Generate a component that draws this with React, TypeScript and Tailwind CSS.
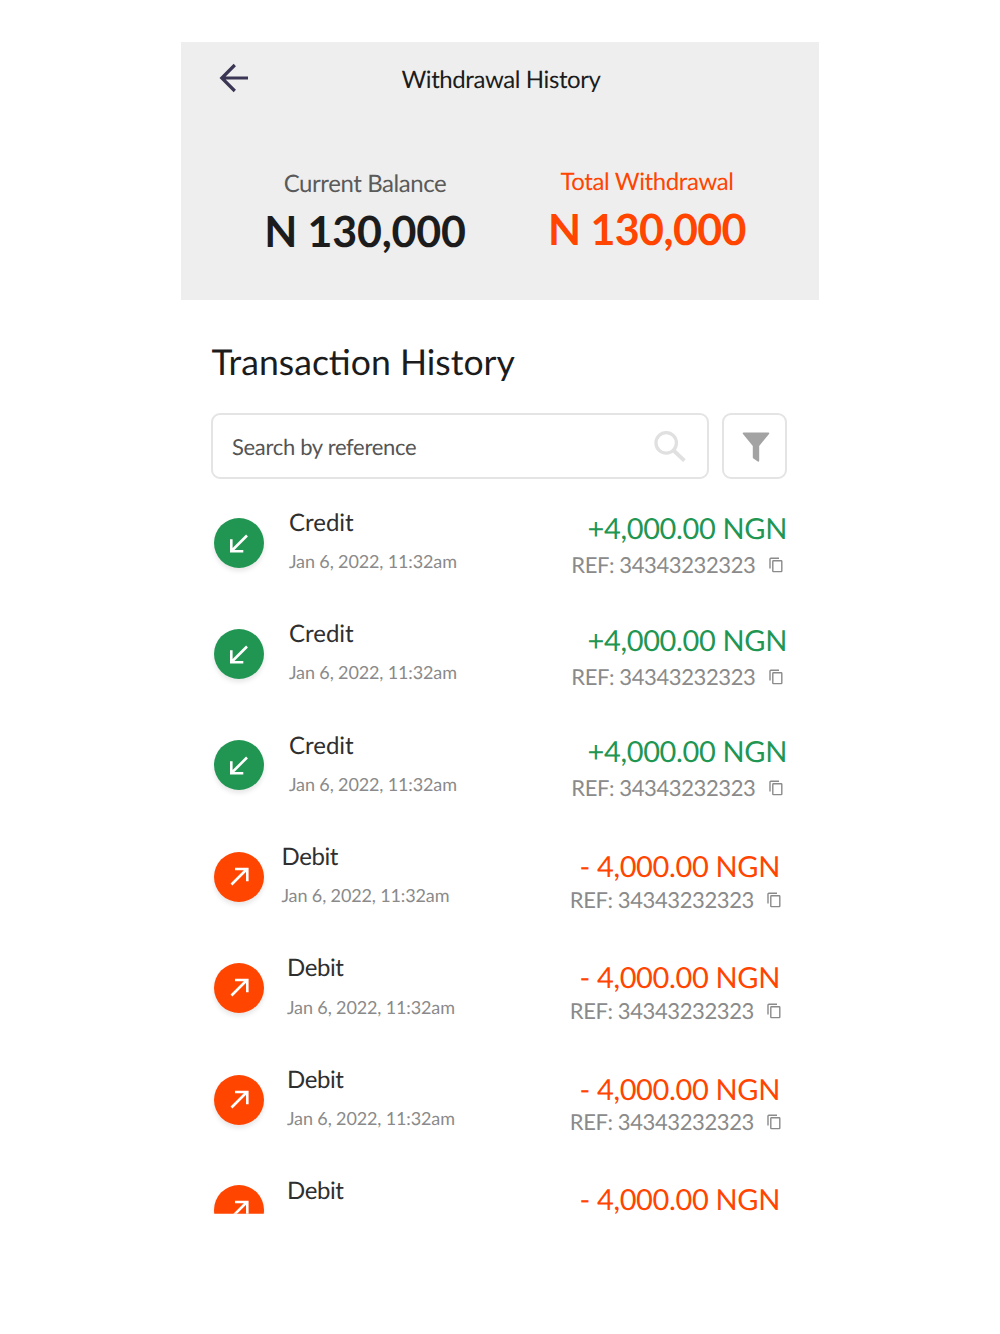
type Transaction = {
  kind: "Credit" | "Debit";
  amount: string;
  inset: string;
  partial?: boolean;
};

const transactions: Transaction[] = [
  { kind: "Credit", amount: "+4,000.00 NGN", inset: "ml-[25px]" },
  { kind: "Credit", amount: "+4,000.00 NGN", inset: "ml-[25px]" },
  { kind: "Credit", amount: "+4,000.00 NGN", inset: "ml-[25px]" },
  { kind: "Debit", amount: "- 4,000.00 NGN", inset: "ml-[17.5px]" },
  { kind: "Debit", amount: "- 4,000.00 NGN", inset: "ml-[23px]" },
  { kind: "Debit", amount: "- 4,000.00 NGN", inset: "ml-[23px]" },
  { kind: "Debit", amount: "- 4,000.00 NGN", inset: "ml-[23px]", partial: true },
];

function CopyIcon() {
  return (
    <svg width="14" height="16" viewBox="0 0 14 16" fill="none" stroke="#8a8a8a" strokeWidth="1.4">
      <rect x="3.8" y="3.8" width="9" height="10.8" rx="0.6" />
      <path d="M1 11.6V2Q1 1.2 1.8 1.2H10" />
    </svg>
  );
}

function Row({ item }: { item: Transaction }) {
  const credit = item.kind === "Credit";
  return (
    <li className="flex h-[111.4px] shrink-0 items-start">
      <div
        className={`flex size-[50px] shrink-0 items-center justify-center rounded-full shadow-[0_3px_5px_rgba(0,0,0,0.1)] ${
          item.partial ? "mt-[10px] [clip-path:inset(-10px_-10px_21.5px_-10px)]" : "mt-[10.7px]"
        } ${credit ? "bg-[#219653]" : "bg-[#ff4500]"}`}
      >
        <svg width="50" height="50" viewBox="0 0 50 50" fill="none" stroke="#fff" strokeWidth="2.6">
          {credit ? (
            <path d="M33 17.5L17.5 33M17.3 21.3V33.2H29.3" />
          ) : (
            <path d="M17.5 32.5L33 17M21 17H33.3V29.3" />
          )}
        </svg>
      </div>
      <div className={item.inset}>
        <p className={`mt-[1.9px] text-[24px] leading-7 text-[#2f2f2f] ${credit ? "" : "tracking-[-0.4px]"}`}>
          {item.kind}
        </p>
        {!item.partial && (
          <p className="mt-[12.2px] text-[18px] leading-6 tracking-[-0.13px] text-[#8a8a8a]">Jan 6, 2022, 11:32am</p>
        )}
      </div>
      <div className={`ml-auto flex flex-col items-end ${credit ? "" : "mr-[7px]"}`}>
        <p
          className={`text-[29px] leading-9 tracking-[-0.35px] ${
            credit ? "mt-[4.4px] text-[#219653]" : item.partial ? "mt-[6.8px] text-[#ff4500]" : "mt-[7.9px] text-[#ff4500]"
          }`}
        >
          {item.amount}
        </p>
        {!item.partial && (
          <div className={`flex items-center text-[#8a8a8a] ${credit ? "mt-[3.9px] mr-[4.5px]" : "mt-[0.5px] -mr-[1px]"}`}>
            <span className="mr-[13px] text-[22px] leading-7 tracking-[-0.38px]">REF: 34343232323</span>
            <CopyIcon />
          </div>
        )}
      </div>
    </li>
  );
}

export default function App() {
  return (
    <div className="h-[1334px] overflow-hidden bg-white pt-[41.5px] pl-[181px] font-['Lato',sans-serif] whitespace-nowrap [text-rendering:geometricPrecision]">
      <main className="w-[638px]">
        <header className="h-[258px] bg-[#eeeeee]">
          <div className="grid grid-cols-[1fr_auto_1fr] items-start pt-[21.5px]">
            <svg className="ml-[38px]" width="30" height="30" viewBox="0 0 30 30" fill="none" stroke="#3b3654" strokeWidth="3.2">
              <path d="M29 15H3M15.8 2L2.8 15L15.8 28" />
            </svg>
            <h1 className="mt-[1.5px] ml-[2px] text-[24px] leading-[30px] tracking-[-0.4px] text-[#1c1c1c]">Withdrawal History</h1>
          </div>
          <div className="mt-[74px] flex">
            <div className="ml-[83.5px] flex w-[201px] flex-col items-center">
              <p className="text-[24px] leading-[30px] tracking-[-0.42px] text-[#5a5a5a]">Current Balance</p>
              <p className="mt-[6.5px] text-[43px] leading-[54px] font-bold tracking-[-0.2px] text-[#1c1c1c]">N 130,000</p>
            </div>
            <div className="-mt-[2px] ml-[81px] flex w-[201px] flex-col items-center text-[#ff4500]">
              <p className="text-[24px] leading-[30px] tracking-[-0.39px]">Total Withdrawal</p>
              <p className="mt-[6.5px] text-[43px] leading-[54px] font-bold tracking-[-0.6px]">N 130,000</p>
            </div>
          </div>
        </header>
        <section className="ml-[30px] w-[576px]">
          <h2 className="mt-[40px] ml-[0.5px] text-[35.6px] leading-[44px] text-[#1c1c1c]">Transaction History</h2>
          <div className="mt-[29.5px] flex gap-[13px]">
            <div className="flex h-[66px] w-[498px] items-center justify-between rounded-[9px] border-2 border-[#e4e4e4] pt-[1.5px] pr-[20px] pl-[19px]">
              <span className="text-[22px] leading-7 tracking-[-0.32px] text-[#555555]">Search by reference</span>
              <svg width="33" height="32" viewBox="0 0 33 32" fill="none" stroke="#e0e0e0">
                <circle cx="12.2" cy="11.9" r="10.2" strokeWidth="3.3" />
                <path d="M20.1 20L30.4 29.6" strokeWidth="3.8" />
              </svg>
            </div>
            <div className="flex h-[66px] w-[65px] items-center justify-center rounded-[9px] border-2 border-[#e4e4e4]">
              <svg className="mt-[2px] ml-[2px]" width="28" height="30" viewBox="0 0 28 30" fill="#a3a3a3">
                <path d="M1.6 0.5H26.4Q27.8 0.6 27 2L17.2 14V28.8Q17 30 15.8 29.5L11.4 26.5Q10.8 26 10.8 25.2V14L1 2Q0.2 0.6 1.6 0.5Z" />
              </svg>
            </div>
          </div>
          <ul className="mt-[28px] ml-[3px] flex flex-col">
            {transactions.map((item, i) => (
              <Row key={i} item={item} />
            ))}
          </ul>
        </section>
      </main>
    </div>
  );
}
